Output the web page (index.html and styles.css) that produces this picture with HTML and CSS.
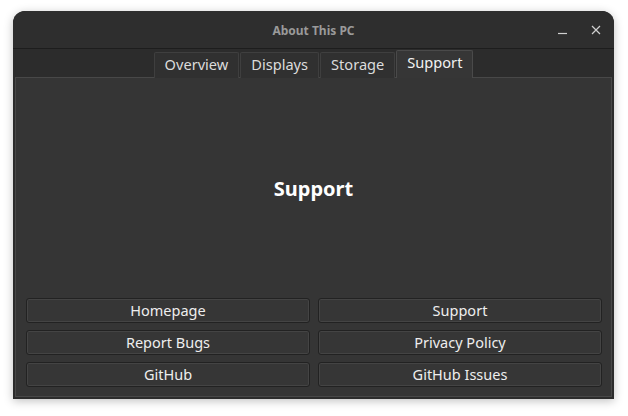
FILE: index.html
```html
<!DOCTYPE html>
<html>
<head>
<meta charset="utf-8">
<link rel="stylesheet" href="styles.css">
</head>
<body>
<div class="window">
  <div class="titlebar">
    <div></div>
    <div class="title">About This PC</div>
    <div class="controls">
      <svg class="ctl" width="14" height="14" viewBox="0 0 14 14"><line x1="2" y1="10.5" x2="11" y2="10.5" stroke="#d0d0d0" stroke-width="1.2"/></svg>
      <svg class="ctl" width="14" height="14" viewBox="0 0 14 14"><path d="M3 3 L11 11 M11 3 L3 11" stroke="#d0d0d0" stroke-width="1.2" fill="none"/></svg>
    </div>
  </div>
  <div class="tabs">
    <div class="tab">Overview</div>
    <div class="tab">Displays</div>
    <div class="tab">Storage</div>
    <div class="tab active">Support</div>
  </div>
  <div class="panel">
    <div class="heading">Support</div>
    <div class="buttons">
      <div class="btn">Homepage</div>
      <div class="btn">Support</div>
      <div class="btn">Report Bugs</div>
      <div class="btn">Privacy Policy</div>
      <div class="btn">GitHub</div>
      <div class="btn">GitHub Issues</div>
    </div>
  </div>
</div>
</body>
</html>
```

FILE: styles.css
```css
html, body {
  margin: 0;
  padding: 0;
  background: #ffffff;
}
body {
  font-family: "Noto Sans", "Open Sans", sans-serif;
  width: 628px;
  height: 416px;
  overflow: hidden;
}
.window {
  margin: 11px 0 0 13px;
  width: 601px;
  height: 388px;
  background: #2c2c2c;
  border-radius: 12px 12px 0 0;
  box-shadow: 0 2px 10px rgba(0, 0, 0, 0.25);
  display: flex;
  flex-direction: column;
  box-sizing: border-box;
}
.titlebar {
  height: 37px;
  flex: none;
  display: grid;
  grid-template-columns: 1fr auto 1fr;
  align-items: center;
  border-bottom: 1px solid #1d1d1d;
  background: #2e2e2e;
  border-radius: 12px 12px 0 0;
}
.title {
  color: #9a9a9a;
  font-weight: bold;
  font-size: 12px;
  padding-top: 1px;
}
.controls {
  display: flex;
  justify-content: flex-end;
  gap: 19px;
  padding-right: 11px;
}
.ctl {
  display: block;
}
.tabs {
  height: 29px;
  flex: none;
  display: flex;
  justify-content: center;
  align-items: flex-end;
  gap: 1px;
  margin-bottom: -1px;
  position: relative;
  z-index: 1;
}
.tab {
  height: 26px;
  box-sizing: border-box;
  padding: 0 10px 4px 10px;
  background: #303030;
  border: 1px solid #3f3f3f;
  border-bottom: none;
  border-radius: 2px 2px 0 0;
  color: #dcdcdc;
  font-size: 14.6px;
  display: flex;
  align-items: center;
}
.tab.active {
  height: 28px;
  background: #363636;
  border-color: #4a4a4a;
  color: #f2f2f2;
  padding-bottom: 6px;
}
.panel {
  flex: 1;
  margin: 0 2px 2px 2px;
  background: #353535;
  border: 1px solid #484848;
  display: flex;
  flex-direction: column;
}
.heading {
  flex: 1;
  display: flex;
  align-items: center;
  justify-content: center;
  color: #ffffff;
  font-weight: bold;
  font-size: 20px;
}
.buttons {
  display: grid;
  grid-template-columns: 1fr 1fr;
  gap: 7px 8px;
  padding: 0 9px 9px 10px;
}
.btn {
  height: 25px;
  box-sizing: border-box;
  padding-bottom: 1px;
  border: 1px solid #222222;
  border-radius: 3px;
  box-shadow: inset 0 0 0 1px #444444;
  background: #363636;
  color: #eeeeee;
  font-size: 14.5px;
  display: flex;
  align-items: center;
  justify-content: center;
}
```
